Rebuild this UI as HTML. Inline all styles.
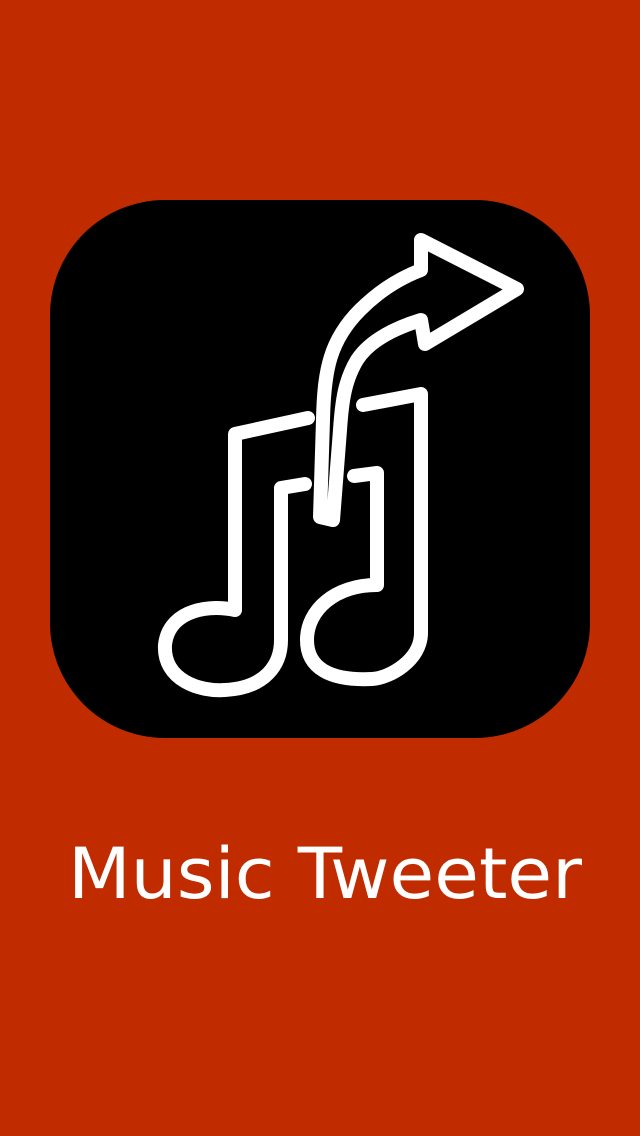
<!DOCTYPE html>
<html><head><style>
html,body{margin:0;padding:0;background:#c02c00;}
body{width:640px;height:1136px;position:relative;overflow:hidden;}
</style></head><body>
<svg width="640" height="1136" viewBox="0 0 640 1136" style="position:absolute;left:0;top:0">
<rect x="0" y="0" width="640" height="1136" fill="#c02c00"/>
<rect x="50" y="200" width="540" height="538" rx="115" ry="115" fill="#000"/>
<g fill="none" stroke="#fff" stroke-width="14" stroke-linejoin="round" stroke-linecap="round">
<path d="M308,418 L235,434 L235,610 C200,603 168,615 165,645 C163,680 200,692 225,690 C265,688 281,665 281,640 L281,488 L305,484"/>
<path d="M363,405 L421,394 L421,633 C421,660 390,678 372,679 C330,681 307,668 307,640 C307,610 335,585 377,585 L377,473 L354,476"/>
<path d="M320,517 L323,420 C324,370 330,340 360,310 C380,290 400,278 421,270 L421,240 L517,289 L425,344 L421,320 C395,328 370,340 357,360 C345,380 342,400 340,430 L333,520 Z"/>
</g>
<text x="68" y="898" textLength="514" lengthAdjust="spacingAndGlyphs" font-family="'DejaVu Sans','Liberation Sans',sans-serif" font-size="70" fill="#fff">Music Tweeter</text>
</svg>
</body></html>
